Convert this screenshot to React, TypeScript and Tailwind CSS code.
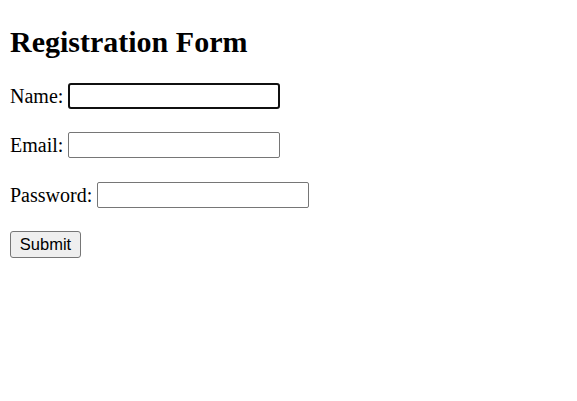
import React from 'react';

const serif = "font-['Liberation_Serif','Times_New_Roman',serif]";

const Field = ({ label, type, focused }: { label: string; type: string; focused?: boolean }) => (
  <div className="flex items-start">
    <label className={`${serif} text-[20px] leading-[26px] h-[26px] text-black mr-[5px]`}>{label}</label>
    <input
      type={type}
      className={
        focused
          ? 'w-[212px] h-[26px] border-2 border-[#101010] rounded-[3px] bg-white outline-none'
          : 'w-[212px] h-[26px] border border-[#767676] rounded-[2px] bg-white outline-none'
      }
    />
  </div>
);

export default function App() {
  return (
    <div className="min-h-[401px] bg-white px-[10px]">
      <h2 className={`${serif} text-[30px] font-bold leading-[33px] text-black pt-[25px] mb-[25px]`}>
        Registration Form
      </h2>
      <form className="flex flex-col" onSubmit={(e) => e.preventDefault()}>
        <div className="h-[49px]">
          <Field label="Name:" type="text" focused />
        </div>
        <div className="h-[50px]">
          <Field label="Email:" type="email" />
        </div>
        <div className="h-[49px]">
          <Field label="Password:" type="password" />
        </div>
        <div>
          <button
            type="submit"
            className="w-[71px] h-[27px] bg-[#efefef] border border-[#767676] rounded-[3px] font-['Liberation_Sans',Arial,sans-serif] text-[16.5px] text-black leading-none"
          >
            Submit
          </button>
        </div>
      </form>
    </div>
  );
}
